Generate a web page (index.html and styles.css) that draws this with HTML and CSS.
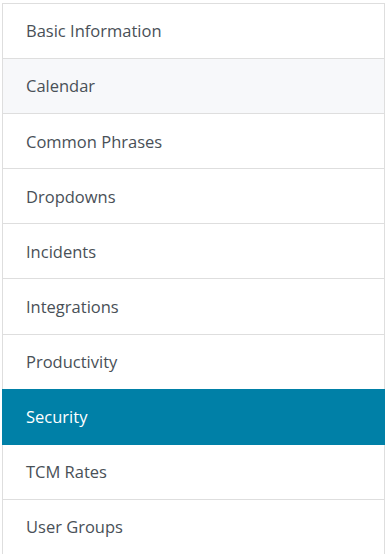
FILE: index.html
```html
<!DOCTYPE html>
<html lang="en">
<head>
    <meta charset="UTF-8">
    <meta name="viewport" content="width=device-width, initial-scale=1.0">
    <title>Settings</title>
    <link rel="stylesheet" href="styles.css">
</head>
<body>
    <div class="settings-menu">
        <a class="menu-item" href="#">Basic Information</a>
        <a class="menu-item hover" href="#">Calendar</a>
        <a class="menu-item" href="#">Common Phrases</a>
        <a class="menu-item" href="#">Dropdowns</a>
        <a class="menu-item" href="#">Incidents</a>
        <a class="menu-item" href="#">Integrations</a>
        <a class="menu-item" href="#">Productivity</a>
        <a class="menu-item active" href="#">Security</a>
        <a class="menu-item" href="#">TCM Rates</a>
        <a class="menu-item" href="#">User Groups</a>
    </div>
</body>
</html>
```

FILE: styles.css
```css
body {
    margin: 0;
    background: #fff;
    font-family: 'Open Sans', sans-serif;
}
.settings-menu {
    display: flex;
    flex-direction: column;
    margin: 3px 0 0 2px;
    width: 383px;
}
.menu-item {
    display: block;
    position: relative;
    padding: 15.4px 23px 14.71px;
    line-height: 24px;
    font-size: 16.5px;
    color: #495057;
    text-decoration: none;
    background: #fff;
    border: 1px solid #dedede;
    margin-bottom: -1px;
}
.menu-item.hover {
    background: #f7f8fa;
}
.menu-item.active {
    z-index: 1;
    color: #fff;
    background: #0080a7;
    border-color: #0080a7;
}
```
